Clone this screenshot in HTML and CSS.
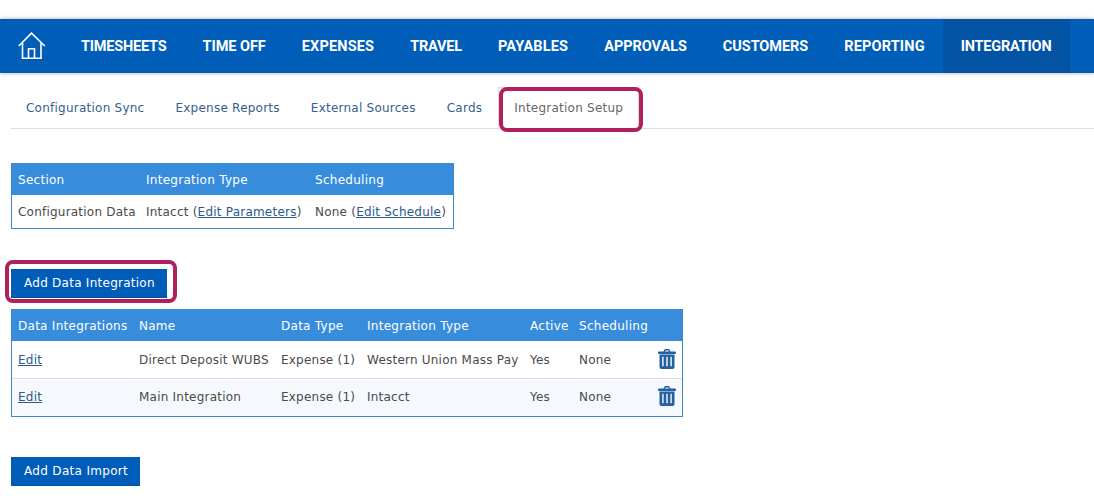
FILE: index.html
```html
<!DOCTYPE html>
<html lang="en">
<head>
<meta charset="utf-8">
<title>Integration Setup</title>
<link rel="stylesheet" href="styles.css">
</head>
<body>
<nav class="topnav">
  <a class="home" href="#" aria-label="Home">
    <svg width="28" height="28" viewBox="0 0 28 28" fill="none" stroke="#fff" stroke-width="1.6">
      <path d="M.8 14 13.500 1.200 26.800 14"/>
      <path d="M4.500 10.500V26.200h18.500V10.500"/>
      <path d="M10.500 26V16.800h6V26"/>
    </svg>
  </a>
  <a class="navitem tight" href="#">TIMESHEETS</a>
  <a class="navitem" href="#">TIME OFF</a>
  <a class="navitem wide" href="#">EXPENSES</a>
  <a class="navitem tight" href="#">TRAVEL</a>
  <a class="navitem wide" href="#">PAYABLES</a>
  <a class="navitem" href="#">APPROVALS</a>
  <a class="navitem" href="#">CUSTOMERS</a>
  <a class="navitem wide" href="#">REPORTING</a>
  <a class="navitem tight active" href="#">INTEGRATION</a>
</nav>
<div class="tabs">
  <a class="tab" href="#">Configuration Sync</a>
  <a class="tab" href="#">Expense Reports</a>
  <a class="tab" href="#">External Sources</a>
  <a class="tab" href="#">Cards</a>
  <a class="tab current" href="#">Integration Setup<span class="mark mark-tab"></span></a>
</div>
<main class="content">
  <table class="grid grid-config">
    <thead>
      <tr><th class="c-section">Section</th><th class="c-type">Integration Type</th><th>Scheduling</th></tr>
    </thead>
    <tbody>
      <tr>
        <td>Configuration Data</td>
        <td>Intacct (<a href="#">Edit Parameters</a>)</td>
        <td>None (<a href="#">Edit Schedule</a>)</td>
      </tr>
    </tbody>
  </table>
  <div class="action action-first">
    <button class="btn btn-integration" type="button">Add Data Integration<span class="mark mark-btn"></span></button>
  </div>
  <table class="grid grid-data">
    <thead>
      <tr>
        <th class="d-int">Data Integrations</th>
        <th class="d-name">Name</th>
        <th class="d-data">Data Type</th>
        <th class="d-type">Integration Type</th>
        <th class="d-active">Active</th>
        <th class="d-sched">Scheduling</th>
        <th></th>
      </tr>
    </thead>
    <tbody>
      <tr>
        <td><a href="#">Edit</a></td>
        <td>Direct Deposit WUBS</td>
        <td>Expense (1)</td>
        <td>Western Union Mass Pay</td>
        <td>Yes</td>
        <td>None</td>
        <td class="trash">
          <svg width="18" height="20" viewBox="0 0 18 20"><path fill="#23609f" fill-rule="evenodd" d="M5.500 2.600 6.600.4C6.700.2 7 0 7.300 0h3.400c.3 0 .6.2.7.4l1.100 2.200h4.600c.5 0 .9.4.9.9v1c0 .3-.2.5-.5.5H.5C.2 4.600 0 4.400 0 4.100v-1c0-.3.4-.5.9-.5zM7 2.600h4l-.5-1h-3zM1.500 5.600h15V18a2 2 0 0 1-2 2h-11a2 2 0 0 1-2-2zM4.200 7.800v9.400h1.400V7.800zM8.300 7.800v9.400h1.400V7.800zM12.400 7.800v9.400h1.400V7.800z"/></svg>
        </td>
      </tr>
      <tr class="alt">
        <td><a href="#">Edit</a></td>
        <td>Main Integration</td>
        <td>Expense (1)</td>
        <td>Intacct</td>
        <td>Yes</td>
        <td>None</td>
        <td class="trash">
          <svg width="18" height="20" viewBox="0 0 18 20"><path fill="#23609f" fill-rule="evenodd" d="M5.500 2.600 6.600.4C6.700.2 7 0 7.300 0h3.400c.3 0 .6.2.7.4l1.100 2.200h4.600c.5 0 .9.4.9.9v1c0 .3-.2.5-.5.5H.5C.2 4.600 0 4.400 0 4.100v-1c0-.3.4-.5.9-.5zM7 2.600h4l-.5-1h-3zM1.500 5.600h15V18a2 2 0 0 1-2 2h-11a2 2 0 0 1-2-2zM4.200 7.800v9.400h1.400V7.800zM8.300 7.800v9.400h1.400V7.800zM12.400 7.800v9.400h1.400V7.800z"/></svg>
        </td>
      </tr>
    </tbody>
  </table>
  <div class="action action-last">
    <button class="btn btn-import" type="button">Add Data Import</button>
  </div>
</main>
</body>
</html>
```
FILE: styles.css
```css
* { box-sizing: border-box; }
html, body { margin: 0; padding: 0; background: #fff; }
body {
  width: 1094px;
  height: 496px;
  overflow: hidden;
  padding-top: 19px;
  font-family: "DejaVu Sans", Verdana, sans-serif;
  font-size: 12px;
  letter-spacing: .22px;
  color: #4a4a4a;
}
.topnav {
  display: flex;
  align-items: stretch;
  height: 54px;
  background: #005eb8;
  box-shadow: 0 0 4px rgba(0, 0, 0, .35);
}
.home {
  display: flex;
  align-items: center;
  width: 63px;
  padding: 0 0 1px 18px;
}
.navitem {
  display: flex;
  align-items: center;
  padding: 0 18px;
  color: #fff;
  text-decoration: none;
  font-family: Roboto, "Liberation Sans", sans-serif;
  font-weight: 700;
  font-size: 14.5px;
  letter-spacing: -.05px;
}
.navitem.tight { letter-spacing: -.2px; }
.navitem.wide { letter-spacing: .17px; }
.navitem.active { background: #0353a4; padding: 0 19px 0 18px; }
.tabs {
  display: flex;
  height: 42px;
  margin: 14px 0 0 11px;
  border-bottom: 1px solid #ddd;
}
.tab {
  position: relative;
  display: flex;
  align-items: center;
  padding: 1px 15px 0;
  margin-right: 1px;
  color: #34618f;
  letter-spacing: .24px;
  text-decoration: none;
}
.tab.current {
  margin-right: 0;
  color: #666;
  background: #fff;
  border: 1px solid #ddd;
  border-bottom-color: #fff;
}
.mark {
  position: absolute;
  border: 4px solid #b0205c;
  border-radius: 8px;
  pointer-events: none;
}
.mark-tab { left: 0; right: -5px; top: -1px; bottom: -5px; }
.mark-btn { left: -6px; right: -10px; top: -9px; bottom: -6px; }
.content { padding: 34px 0 0 11px; }
.grid {
  border-collapse: separate;
  border-spacing: 0;
  border: 1px solid #3f85cc;
  border-top: 0;
  table-layout: fixed;
}
.grid-config { width: 443px; }
.grid-data { width: 672px; }
.grid th {
  height: 32px;
  padding: 1px 0 0 6px;
  text-align: left;
  font-weight: 400;
  letter-spacing: .27px;
  color: #fff;
  background: #388cdc;
  white-space: nowrap;
}
.grid td {
  height: 33px;
  padding: 0 0 0 6px;
  white-space: nowrap;
}
.grid a { color: #2b5a8c; }
.grid-data td { height: 37px; }
.grid-data tr + tr td { border-top: 1px solid #ddd; height: 38px; padding-bottom: 2px; }
.grid-data .alt td { background: #f5f9fd; }
.c-section { width: 128px; }
.c-type { width: 169px; }
.d-int { width: 121px; }
.d-name { width: 142px; }
.d-data { width: 86px; }
.d-type { width: 163px; }
.d-active { width: 49px; }
.d-sched { width: 78px; }
.grid-data td.trash { padding: 0 0 2px 7px; }
.grid-data .alt td.trash { padding-bottom: 4px; }
.trash svg { display: block; }
.action { display: flex; }
.action-first { margin-top: 40px; margin-bottom: 11px; }
.action-last { margin-top: 40px; }
.btn {
  position: relative;
  height: 29px;
  padding: 0 12px 0 13px;
  border: 0;
  border-bottom: 1px solid #0353a4;
  background: #005cb9;
  color: #fff;
  font: inherit;
  letter-spacing: .26px;
}
.btn-import { letter-spacing: .32px; }
```
